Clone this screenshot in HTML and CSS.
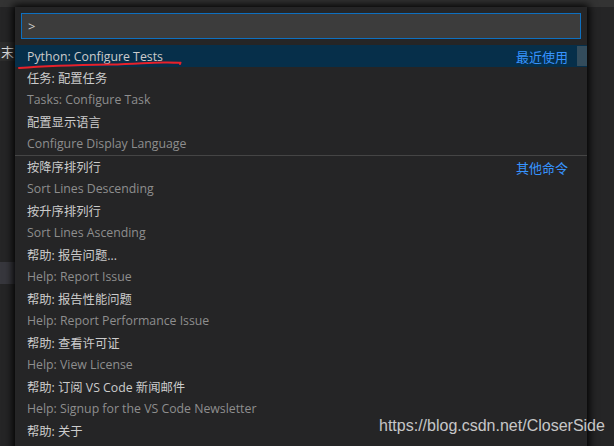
FILE: index.html
```html
<!DOCTYPE html>
<html lang="zh">
<head>
<meta charset="utf-8">
<link rel="stylesheet" href="styles.css">
</head>
<body>
<div class="titlebar"></div>
<div class="editor">
  <div class="tab">末</div>
  <div class="sel-line"></div>
</div>
<div class="quick">
  <div class="input-wrap"><div class="input">&gt;</div></div>
  <div class="list">
    <div class="row single focused">
      <span class="label">Python: Configure Tests</span>
      <span class="kind">最近使用</span>
    </div>
    <div class="row">
      <div class="line"><span class="label">任务: 配置任务</span></div>
      <div class="detail">Tasks: Configure Task</div>
    </div>
    <div class="row">
      <div class="line"><span class="label">配置显示语言</span></div>
      <div class="detail">Configure Display Language</div>
    </div>
    <div class="row sep">
      <div class="line"><span class="label">按降序排列行</span><span class="kind">其他命令</span></div>
      <div class="detail">Sort Lines Descending</div>
    </div>
    <div class="row">
      <div class="line"><span class="label">按升序排列行</span></div>
      <div class="detail">Sort Lines Ascending</div>
    </div>
    <div class="row">
      <div class="line"><span class="label">帮助: 报告问题...</span></div>
      <div class="detail">Help: Report Issue</div>
    </div>
    <div class="row">
      <div class="line"><span class="label">帮助: 报告性能问题</span></div>
      <div class="detail">Help: Report Performance Issue</div>
    </div>
    <div class="row">
      <div class="line"><span class="label">帮助: 查看许可证</span></div>
      <div class="detail">Help: View License</div>
    </div>
    <div class="row">
      <div class="line"><span class="label">帮助: 订阅 VS Code 新闻邮件</span></div>
      <div class="detail">Help: Signup for the VS Code Newsletter</div>
    </div>
    <div class="row">
      <div class="line"><span class="label">帮助: 关于</span></div>
    </div>
    <div class="slider"></div>
  </div>
</div>
<svg class="scribble" width="200" height="20" viewBox="0 0 200 20">
  <path d="M19 13 C 45 11, 80 10, 110 9.5 S 150 7, 168 7.5 S 179 7, 180 9" fill="none" stroke="#e8212a" stroke-width="2" stroke-linecap="round"/>
</svg>
<div class="watermark">https://blog.csdn.net/CloserSide</div>
</body>
</html>
```
FILE: styles.css
```css
html, body {
  margin: 0;
  padding: 0;
  width: 614px;
  height: 446px;
  overflow: hidden;
  background: #1e1e1e;
  font-family: "Segoe UI", "Open Sans", "Noto Sans CJK SC", sans-serif;
}
.titlebar {
  height: 7px;
  background: #333333;
}
.editor {
  height: 439px;
  background: #252526;
  position: relative;
}
.tab {
  position: absolute;
  left: 0;
  top: 35px;
  height: 19px;
  line-height: 19px;
  padding: 0 0 0 1px;
  width: 14px;
  background: #2d2d2d;
  color: #e0e0e0;
  font-size: 13px;
  font-family: "Noto Sans CJK SC", sans-serif;
}
.sel-line {
  position: absolute;
  left: 0;
  top: 255px;
  width: 15px;
  height: 22px;
  background: #37373d;
}
.quick {
  position: absolute;
  left: 15px;
  top: 7px;
  width: 572px;
  height: 446px;
  background: #252526;
  box-shadow: 0 0 8px 2px #000000;
}
.input-wrap {
  padding: 6px;
}
.input {
  height: 24px;
  border: 1px solid #0e70c0;
  background: #3c3c3c;
  color: #cccccc;
  font-size: 13px;
  line-height: 24px;
  padding-left: 6px;
}
.list {
  position: relative;
}
.row {
  padding: 0 19px 0 12px;
  color: #cccccc;
  font-size: 12.3px;
}
.row.single {
  height: 22px;
  line-height: 24px;
  display: flex;
  justify-content: space-between;
}
.row.focused {
  background: #062f4a;
}
.line {
  height: 22px;
  line-height: 24px;
  display: flex;
  justify-content: space-between;
}
.detail {
  height: 22px;
  line-height: 22px;
  color: #8e8e8e;
  font-size: 12.3px;
}
.row.sep {
  border-top: 1px solid #454545;
}
.kind {
  color: #3794ff;
  font-size: 13px;
  font-family: "Noto Sans CJK SC", sans-serif;
}
.slider {
  position: absolute;
  right: 0;
  top: 1px;
  width: 10px;
  height: 20px;
  background: rgba(121, 121, 121, 0.4);
}
.scribble {
  position: absolute;
  left: 0;
  top: 55px;
}
.watermark {
  position: absolute;
  left: 379px;
  top: 417px;
  font-family: "Liberation Sans", Arial, sans-serif;
  font-size: 16px;
  color: rgba(230, 230, 230, 0.85);
}
```
